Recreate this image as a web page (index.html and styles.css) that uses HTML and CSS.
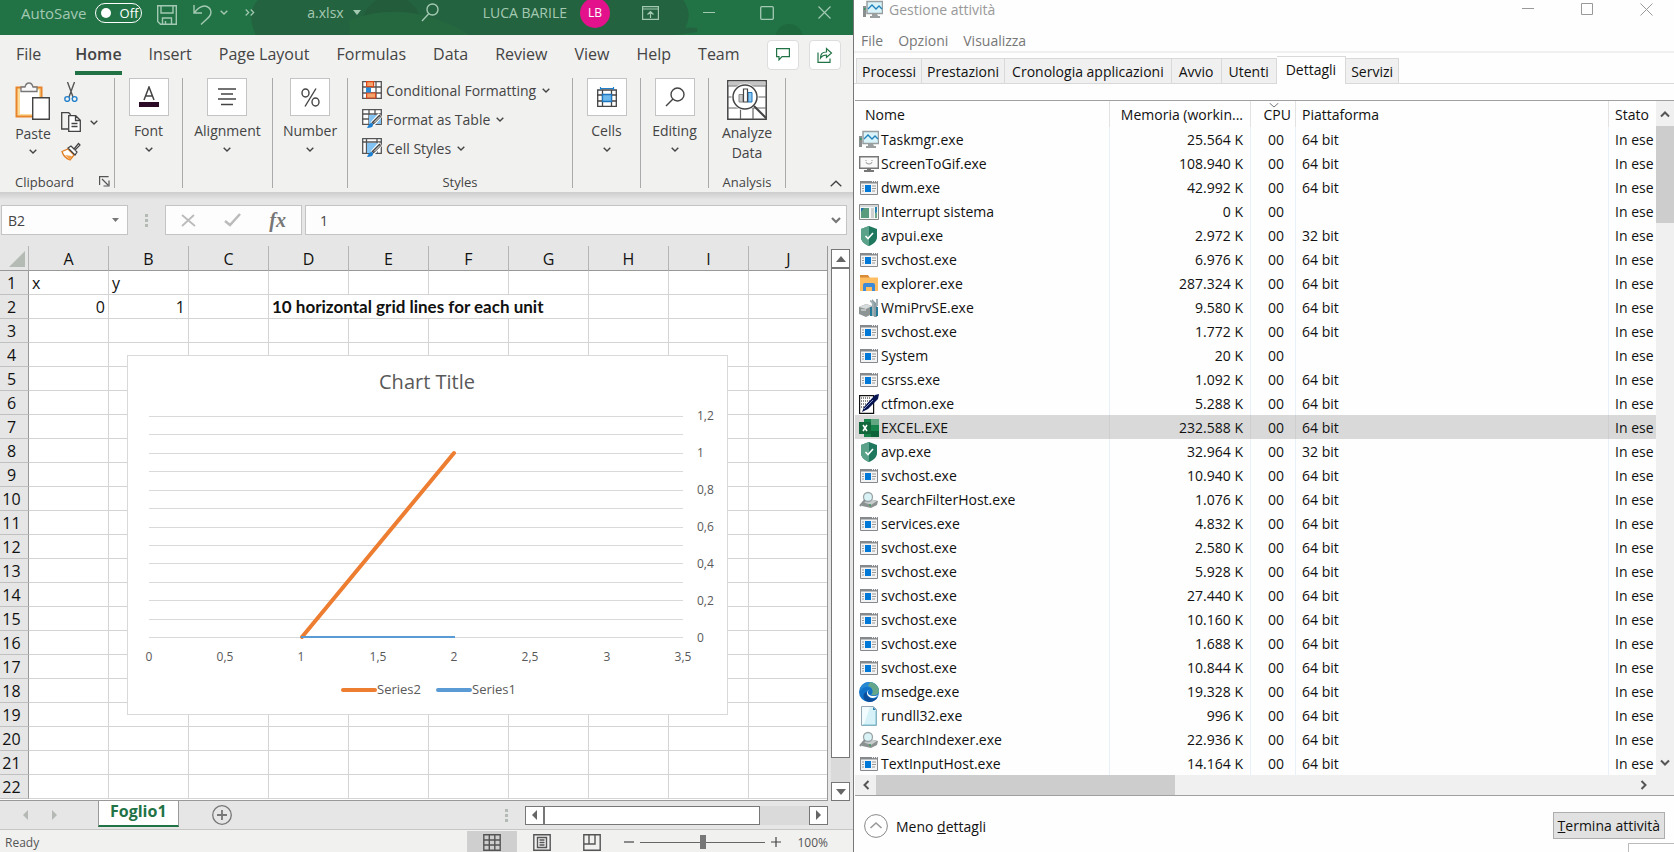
FILE: index.html
```
<!DOCTYPE html>
<html lang="en">
<head>
<meta charset="utf-8">
<title>a.xlsx - Excel</title>
<link rel="stylesheet" href="styles.css">
</head>
<body>
<svg class="sprite" aria-hidden="true">
  <symbol id="chev" viewBox="0 0 8 5"><path d="M.7.7 4 4 7.3.7" fill="none" stroke="currentColor" stroke-width="1.4"/></symbol>
  <symbol id="i-app" viewBox="0 0 20 20"><path d="M1.500 3.500h17v13h-17z" fill="#f3f3f3" stroke="#85898d"/><path d="M1 3h18v2.500H1z" fill="#85898d"/><path d="M13 3.600h1M15 3.600h1M17 3.600h1" stroke="#fff"/><path d="M6 7h6v7H6z" fill="#0078d7"/><path d="M3 8h2M3 10.500h2M3 13h2M13 8h4M13 10.500h4M13 13h3" stroke="#999"/></symbol>
  <symbol id="i-int" viewBox="0 0 20 20"><path d="M.5 2.500h19v15H.5z" fill="#f4f6f6" stroke="#888"/><path d="M1 3h18v2H1z" fill="#d5d8d8"/><path d="M2 6h8v10H2z" fill="#5a9a7d"/><path d="M2 6h3L2 10z" fill="#226fa8"/><path d="M12 7h3M12 9h3M12 11h3M12 13h3M12 15h3" stroke="#aaa"/><path d="M16 5h2v5l-2 3z" fill="#2580ae"/><path d="M16 11h2v5h-2z" fill="#6ca488"/></symbol>
  <symbol id="i-task" viewBox="0 0 20 20"><path d="M0 6h3v11H0z" fill="#8b8f8f"/><path d="M1 8h1.500v2H1z" fill="#3b9c65"/><path d="M4 1.500h15.500v12H4z" fill="#d9f3fa" stroke="#989fa1" stroke-width="1.500"/><path d="m5 9 4-4 4 4 3-3 3 3" fill="none" stroke="#2082bb" stroke-width="1.300"/><path d="M9 14h5l1 2h2v2H7v-2h2z" fill="#9b9fa0"/></symbol>
  <symbol id="i-gif" viewBox="0 0 20 20"><path d="M.7 2.700h18.600v11.600H.7z" fill="#fafafa" stroke="#777" stroke-width="1.400"/><path d="M7 6v1M13 6v1M7 8q0 2 3 2t3-2" fill="none" stroke="#999"/><path d="M8 14h4v2h3v2H5v-2h3z" fill="#777"/></symbol>
  <symbol id="i-shield" viewBox="0 0 20 20"><path d="m10 0 8 3v8c0 4-3 7-8 9-5-2-8-5-8-9V3z" fill="#1f785e"/><path d="m10 0-8 3v8c0 4 3 7 8 9z" fill="#5ba28a"/><path d="m6.500 10 2.500 2.500L14 7" fill="none" stroke="#fff" stroke-width="1.600"/></symbol>
  <symbol id="i-folder" viewBox="0 0 20 20"><path d="M1 1h8l2 3h8v13H1z" fill="#d98c38"/><path d="M1 3.500h18V17H1z" fill="#ffbe62"/><path d="M4 17v-6q0-2 2-2h8q2 0 2 2v6h-3v-4H7v4z" fill="#3d8bd8"/></symbol>
  <symbol id="i-wmi" viewBox="0 0 20 20"><path d="m0 9 7-3 6 2v8l-6 3-7-3z" fill="#8c9494"/><path d="m0 9 7-3 6 2-6 3z" fill="#d5dada"/><path d="M2 12h5" stroke="#eee"/><path d="M13 1v7l2 11h3V6z" fill="#8b9da2"/><path d="M11 3q3 0 3 5v10M18 1v7" fill="none" stroke="#9fb0b4" stroke-width="2"/><path d="M12 9v9M18 9v9" stroke="#267b9a" stroke-width="2"/></symbol>
  <symbol id="i-ctf" viewBox="0 0 20 20"><path d="M.6 1.600h14v17.800H.6z" fill="#fff" stroke="#111" stroke-width="1.200"/><path d="M2 4h10M2 7h9M2 10h7M2 13h5" stroke="#111" stroke-dasharray="1 1"/><path d="m3 18 2-5L16 1l4-1-1 5L9 15z" fill="#071452"/><path d="m5 15 9-9" stroke="#8894cc"/></symbol>
  <symbol id="i-excel" viewBox="0 0 20 20"><path d="M5 1h15v18H5z" fill="#16834a"/><path d="M12 1h8v6h-8z" fill="#62a781"/><path d="M12 13h8v6h-8z" fill="#0d633a"/><path d="M0 4h12v12H0z" fill="#12683b"/><path d="m4 7 4 6M8 7l-4 6" stroke="#fff" stroke-width="1.600"/></symbol>
  <symbol id="i-search" viewBox="0 0 20 20"><path d="m3 13 7-4 9 2-1 4-6 3-9-2z" fill="#8c9191"/><path d="m4 12 7-3 7 2-6 4z" fill="#c8cccc"/><circle cx="9" cy="7" r="4.500" fill="#d9f2f6" stroke="#9aa3a5" stroke-width="1.300"/><path d="m6 10-5 6" stroke="#8a9092" stroke-width="2"/><path d="M10 15h2" stroke="#3e9d60" stroke-width="1.500"/></symbol>
  <symbol id="i-edge" viewBox="0 0 20 20"><circle cx="10" cy="10" r="10" fill="#1272c8"/><path d="M10 0c6 0 10 4 10 9 0 4-5 6-8 4 4-4 1-8-4-8-3 0-6 2-7 4 0-5 4-9 9-9z" fill="#2687d2"/><path d="M11 0c6 1 9 5 9 9 0 4-5 5-8 4 3-2 2-8-3-9z" fill="#65a68a"/><path d="M8 10c-1 5 5 8 9 6l2-1c-3 5-8 6-12 4-3-2-4-8 1-9z" fill="#0b4d9a"/><path d="M10 8c-2 1-2 5 3 6 2 0 5 0 6-1-3 5-10 3-11-1-.5-2 1-4 2-4z" fill="#fff"/></symbol>
  <symbol id="i-doc" viewBox="0 0 20 20"><path d="M2.500.5h12l3 3v16h-15z" fill="#d6f2f8" stroke="#93a8b4"/><path d="M3 1h8L5 18H3z" fill="#f2fcfe"/><path d="m14 1 3 3h-3z" fill="#2b7fb0"/><path d="M17 5v14H4" fill="none" stroke="#7abdd0"/></symbol>
  <symbol id="s-cond" viewBox="0 0 20 18"><path d="M.7.7h18.600v16.600H.7zM6 0v18M14 0v18M0 6h20M0 12h20" fill="#fff" stroke="#555" stroke-width="1.300"/><path d="M4.600.6h7v5h-7zM4.600 12h9v5h-9z" fill="#f4a36b" stroke="#d8461b" stroke-width="1.200"/><path d="M4 6.500h5v5H4z" fill="#2b8ad5"/></symbol>
  <symbol id="s-table" viewBox="0 0 20 20"><path d="M.7.7h18.600v14.600H.7zM7 0v16M13 0v16M0 5h20M0 10h20" fill="#fff" stroke="#555" stroke-width="1.300"/><path d="M7 6h12v9H7z" fill="#83c3f3"/><path d="m18.500 6-8 9" stroke="#fff" stroke-width="5"/><path d="m18.500 6.500-8 8" stroke="#444" stroke-width="3"/><path d="m18 7.500-6 6" stroke="#fff"/><path d="M5 19q2-5 5-5 2 2 0 4-2 1-5 1z" fill="#1d7fd0"/></symbol>
  <symbol id="s-cell" viewBox="0 0 20 20"><path d="M.7.7h18.600v14.600H.7zM4.500 0v16M15 0v16M0 4h20" fill="#fff" stroke="#555" stroke-width="1.300"/><path d="M5 5h10v10H5z" fill="#83c3f3"/><path d="m18.500 6-8 9" stroke="#fff" stroke-width="5"/><path d="m18.500 6.500-8 8" stroke="#444" stroke-width="3"/><path d="m18 7.500-6 6" stroke="#fff"/><path d="M5 19q2-5 5-5 2 2 0 4-2 1-5 1z" fill="#1d7fd0"/></symbol>
</svg>

<div class="desktop">
<section class="excel" aria-label="Excel">
  <header class="titlebar">
    <svg class="title-art" viewBox="0 0 854 35" preserveAspectRatio="none" aria-hidden="true"><path d="M258 0q-12 14-2 35h420l22-3 0-4q-10-1-12 0 8-14-2-28z" fill="#24633f"/><circle cx="392" cy="26" r="30" fill="#225c3a"/><circle cx="790" cy="38" r="14" fill="#1f693f"/><path d="M350 20q60-22 120 15H350z" fill="#256840"/></svg>
    <label class="autosave" for="autosave">AutoSave</label>
    <span class="toggle"><input type="checkbox" id="autosave"><span class="knob"></span><span>Off</span></span>
    <button class="tb save" aria-label="Save"><svg width="20" height="20" viewBox="0 0 20 20"><path d="M.7.7h18.600v18.600H3.500L.7 16.500zM4 1v7h12V1M5.500 19v-6h9v6M8.500 19v-3" fill="none" stroke="currentColor" stroke-width="1.400"/></svg></button>
    <button class="tb undo" aria-label="Undo"><svg width="19" height="20" viewBox="0 0 19 20"><path d="M1 0v8h8M1.500 7.500C5 3 8 1 11.500 1 15 1 18 4 18 7c0 4-3 6-10 12.500" fill="none" stroke="currentColor" stroke-width="1.400"/></svg></button>
    <button class="tb undo-more" aria-label="Undo list"><svg width="8" height="5"><use href="#chev"/></svg></button>
    <button class="tb more" aria-label="More commands"><svg width="10" height="7" viewBox="0 0 10 7"><path d="m.7.5 3 3-3 3M5.700.5l3 3-3 3" fill="none" stroke="currentColor" stroke-width="1.200"/></svg></button>
    <button class="tb filename">a.xlsx<svg width="8" height="5" viewBox="0 0 8 5"><path d="M0 0h8L4 5z" fill="currentColor"/></svg></button>
    <button class="tb find" aria-label="Search"><svg width="18" height="19" viewBox="0 0 18 19"><path d="M7.500 11 1 18" stroke="currentColor" stroke-width="1.400"/><circle cx="11.500" cy="6.500" r="5.500" fill="none" stroke="currentColor" stroke-width="1.400"/></svg></button>
    <button class="tb user">LUCA BARILE<span class="avatar">LB</span></button>
    <span class="win-controls">
      <button class="tb" aria-label="Ribbon display options"><svg width="17" height="14" viewBox="0 0 17 14"><path d="M.6.6h15.800v12.800H.6zM1 3h15M8.500 12V6M5.500 8.500l3-3 3 3" fill="none" stroke="currentColor" stroke-width="1.200"/></svg></button>
      <button class="tb" aria-label="Minimize"><svg width="13" height="14" viewBox="0 0 13 14"><path d="M0 6.500h12" stroke="currentColor"/></svg></button>
      <button class="tb" aria-label="Maximize"><svg width="14" height="14" viewBox="0 0 14 14"><rect x=".7" y=".7" width="12.600" height="12.600" rx="1" fill="none" stroke="currentColor" stroke-width="1.300"/></svg></button>
      <button class="tb" aria-label="Close"><svg width="13" height="13" viewBox="0 0 13 13"><path d="m.5.5 12 12M12.500.5l-12 12" stroke="currentColor" stroke-width="1.200"/></svg></button>
    </span>
  </header>

  <nav class="ribbon-tabs">
    <button class="file">File</button><button class="active">Home</button><button>Insert</button><button>Page Layout</button><button>Formulas</button><button>Data</button><button>Review</button><button>View</button><button>Help</button><button>Team</button>
    <span class="tab-actions">
      <button class="boxed" aria-label="Comments"><svg width="14" height="13" viewBox="0 0 14 13"><path d="M.6.600h12.800v8H6L3 11.800V8.600H.6z" fill="none" stroke="#217346" stroke-width="1.200"/></svg></button>
      <button class="boxed" aria-label="Share"><svg width="16" height="16" viewBox="0 0 16 16"><path d="M1 5.500v9.900h12v-4M3.500 11q0-6 6-6V1.500L14.500 6l-5 4.500V8q-4 0-6 3z" fill="none" stroke="#217346" stroke-width="1.200"/></svg></button>
    </span>
  </nav>

  <div class="ribbon">
    <div class="group clipboard">
      <div class="clip-body">
        <button class="paste"><svg width="36" height="38" viewBox="0 0 36 38"><path d="M1.500 5.500h25v29h-25z" fill="#fbdc9a" stroke="#e8842a" stroke-width="2"/><path d="M5 8h19v24H5z" fill="#fff"/><path d="M6 9.500V5h4q1-4 4-4t4 4h4v4.500z" fill="#f8f8f8" stroke="#777" stroke-width="1.300"/><path d="M17.700 15.700h16.600v21.600H17.700z" fill="#fff" stroke="#444" stroke-width="1.400"/></svg><span>Paste</span><svg class="chev" width="8" height="5"><use href="#chev"/></svg></button>
        <div class="clip-tools">
          <button aria-label="Cut"><svg width="14" height="20" viewBox="0 0 14 20"><path d="m3.500 0 5.500 15M10.500 0 5 15" stroke="#555" stroke-width="1.400"/><circle cx="3.200" cy="17" r="2.400" fill="none" stroke="#2180cc" stroke-width="1.400"/><circle cx="10.600" cy="17" r="2.400" fill="none" stroke="#2180cc" stroke-width="1.400"/></svg></button>
          <button class="copy" aria-label="Copy"><svg width="20" height="20" viewBox="0 0 20 20"><path d="M7 17H.700V.7h7l2 2" fill="none" stroke="#444" stroke-width="1.300"/><path d="M7.700 3.700h7l4.600 4.600v11H7.700zM14.500 4v4.500H19M10.500 11.500h6M10.500 14.500h6" fill="#fff" stroke="#444" stroke-width="1.300"/></svg><svg class="chev" width="8" height="5"><use href="#chev"/></svg></button>
          <button aria-label="Format Painter"><svg width="20" height="19" viewBox="0 0 20 19"><path d="M1 9.500 7 7l6 6-4 5Q3 16 1 9.500z" fill="#fff" stroke="#e07b1c" stroke-width="1.300"/><path d="m4 13 7 1-2 4z" fill="#f2a04a"/><path d="m7 6 3-2 3 3 4.500-5.500 1.500 1.500-5 5 2 2-2 3z" fill="#fff" stroke="#444" stroke-width="1.200"/></svg></button>
        </div>
      </div>
      <div class="group-name spread">Clipboard<svg width="11" height="11" viewBox="0 0 11 11"><path d="M.6 9V.6h9M3 3l6 6M10 4.500V10H4.500" fill="none" stroke="#555" stroke-width="1.200"/></svg></div>
    </div>
    <div class="group narrow"><button class="tile-btn"><span class="tile"><svg width="20" height="22" viewBox="0 0 20 22"><path d="m5 14 5-13 5 13M6.700 10h6.600" fill="none" stroke="#444" stroke-width="1.500"/><path d="M0 16h20v5H0z" fill="#2b0a25"/></svg></span>Font<svg class="chev" width="8" height="5"><use href="#chev"/></svg></button></div>
    <div class="group align"><button class="tile-btn"><span class="tile"><svg width="18" height="18" viewBox="0 0 18 18"><path d="M0 1h18M3 6h12M0 11h18M3 16.500h12" stroke="#444" stroke-width="1.300"/></svg></span>Alignment<svg class="chev" width="8" height="5"><use href="#chev"/></svg></button></div>
    <div class="group number"><button class="tile-btn"><span class="tile"><svg width="19" height="19" viewBox="0 0 19 19"><ellipse cx="4.500" cy="5" rx="3.500" ry="4" fill="none" stroke="#444" stroke-width="1.400"/><ellipse cx="14.500" cy="14" rx="3.500" ry="4" fill="none" stroke="#444" stroke-width="1.400"/><path d="M15 .5 4 18.500" stroke="#444" stroke-width="1.400"/></svg></span>Number<svg class="chev" width="8" height="5"><use href="#chev"/></svg></button></div>
    <div class="group styles">
      <div class="style-list">
        <button><svg width="20" height="18"><use href="#s-cond"/></svg>Conditional Formatting<svg class="chev" width="8" height="5"><use href="#chev"/></svg></button>
        <button><svg width="20" height="20"><use href="#s-table"/></svg>Format as Table<svg class="chev" width="8" height="5"><use href="#chev"/></svg></button>
        <button><svg width="20" height="20"><use href="#s-cell"/></svg>Cell Styles<svg class="chev" width="8" height="5"><use href="#chev"/></svg></button>
      </div>
      <div class="group-name">Styles</div>
    </div>
    <div class="group narrow"><button class="tile-btn"><span class="tile"><svg width="20" height="20" viewBox="0 0 20 20"><path d="M.7 3h18.600v16.300H.7zM5.500 3v16M14.500 3v16M0 8h20M0 14h20" fill="none" stroke="#444" stroke-width="1.300"/><path d="M5.500 7.500h9v7h-9z" fill="#6db9ee" stroke="#1d75bd" stroke-width="1.300"/><path d="M3 1.500h14M3.500 0v3M16.500 0v3" stroke="#2180cc" stroke-width="1.200"/></svg></span>Cells<svg class="chev" width="8" height="5"><use href="#chev"/></svg></button></div>
    <div class="group narrow"><button class="tile-btn"><span class="tile"><svg width="20" height="20" viewBox="0 0 20 20"><path d="m8 12-7 7" stroke="#444" stroke-width="1.400"/><circle cx="12.500" cy="7.500" r="6.500" fill="none" stroke="#444" stroke-width="1.400"/></svg></span>Editing<svg class="chev" width="8" height="5"><use href="#chev"/></svg></button></div>
    <div class="group analysis">
      <button class="analyze"><svg width="40" height="40" viewBox="0 0 40 40"><path d="M.8.800h38.400v38.400H.8z" fill="#fff" stroke="#444" stroke-width="1.500"/><path d="M1.500 1.500h37v4h-37z" fill="#c5c5c5"/><path d="M1 6h38M1 17h38M1 28h38M13.500 28v11M26 28v11" stroke="#666" stroke-width="1.200"/><circle cx="18" cy="17" r="13.500" fill="#fff"/><circle cx="18" cy="17" r="12" fill="#fff" stroke="#444" stroke-width="1.500"/><path d="m27 26 12 12" stroke="#444" stroke-width="2"/><path d="M12 14.500h4V22h-4z" fill="#c9c9c9" stroke="#888"/><path d="M21 12.500h4V22h-4z" fill="#8ac8f2" stroke="#1d75bd"/><path d="M16.500 9h4v13h-4z" fill="#fff" stroke="#444" stroke-width="1.200"/></svg><span>Analyze<br>Data</span></button>
      <div class="group-name">Analysis</div>
    </div>
    <button class="collapse" aria-label="Collapse the ribbon"><svg width="12" height="7" viewBox="0 0 12 7"><path d="m.7 6.300 5.300-5 5.300 5" fill="none" stroke="#444" stroke-width="1.400"/></svg></button>
  </div>

  <div class="formula-bar">
    <div class="name-box"><input aria-label="Name box" value="B2"><button aria-label="Names"><svg width="7" height="4" viewBox="0 0 7 4"><path d="M0 0h7L3.500 4z" fill="#777"/></svg></button></div>
    <span class="grip"></span>
    <div class="fx-buttons">
      <button aria-label="Cancel"><svg width="15" height="13" viewBox="0 0 15 13"><path d="m1 1 13 11M13 1 1 12" stroke="#bbb" stroke-width="1.800"/></svg></button>
      <button aria-label="Enter"><svg width="17" height="14" viewBox="0 0 17 14"><path d="m1 8 5 4L16 1" fill="none" stroke="#bbb" stroke-width="2.500"/></svg></button>
      <button class="fx" aria-label="Insert function">fx</button>
    </div>
    <div class="formula"><input aria-label="Formula" value="1"><button aria-label="Expand formula bar"><svg width="10" height="7" viewBox="0 0 10 7"><path d="m1 1 4 4 4-4" fill="none" stroke="#777" stroke-width="2.200"/></svg></button></div>
  </div>

  <div class="sheet-area">
    <div class="sheet">
      <table class="cells" id="cells"></table>
      <svg class="chart" width="601" height="360" viewBox="0 0 601 360" role="img" aria-label="Chart Title">
        <rect x=".5" y=".5" width="600" height="359" fill="#fff" stroke="#d9d9d9"/>
        <text class="chart-title" x="300" y="34" text-anchor="middle">Chart Title</text>
        <path class="rules" d="M22 61.500h534M22 79.500h534M22 98.500h534M22 116.500h534M22 135.500h534M22 153.500h534M22 172.500h534M22 190.500h534M22 208.500h534M22 227.500h534M22 245.500h534M22 264.500h534M22 282.500h534"/>
        <path d="M175 282 327 98" stroke="#ed7d31" stroke-width="4" stroke-linecap="round"/>
        <path d="M174 282h154" stroke="#5b9bd5" stroke-width="2"/>
        <g class="axis">
          <text x="570" y="65">1,2</text><text x="570" y="102">1</text><text x="570" y="139">0,8</text><text x="570" y="176">0,6</text><text x="570" y="213">0,4</text><text x="570" y="250">0,2</text><text x="570" y="287">0</text>
        </g>
        <g class="axis" text-anchor="middle">
          <text x="22" y="306">0</text><text x="98" y="306">0,5</text><text x="174" y="306">1</text><text x="251" y="306">1,5</text><text x="327" y="306">2</text><text x="403" y="306">2,5</text><text x="480" y="306">3</text><text x="556" y="306">3,5</text>
        </g>
        <path d="M216 335h32" stroke="#ed7d31" stroke-width="4" stroke-linecap="round"/><path d="M311 335h32" stroke="#5b9bd5" stroke-width="4" stroke-linecap="round"/>
        <g class="legend"><text x="250" y="339">Series2</text><text x="345" y="339">Series1</text></g>
      </svg>
    </div>
    <div class="vscroll">
      <button aria-label="Scroll up"><svg width="10" height="6" viewBox="0 0 10 6"><path d="m0 6 5-6 5 6z" fill="#666"/></svg></button>
      <div class="thumb"></div><div class="track"></div>
      <button aria-label="Scroll down"><svg width="10" height="6" viewBox="0 0 10 6"><path d="m0 0 5 6 5-6z" fill="#666"/></svg></button>
    </div>
  </div>

  <div class="sheet-tabs">
    <button class="nav-arrow" aria-label="Previous sheet"><svg width="5" height="10" viewBox="0 0 5 10"><path d="M5 0v10L0 5z" fill="#b5b9b5"/></svg></button>
    <button class="nav-arrow" aria-label="Next sheet"><svg width="5" height="10" viewBox="0 0 5 10"><path d="M0 0v10l5-5z" fill="#b5b9b5"/></svg></button>
    <button class="sheet-tab">Foglio1</button>
    <button class="add-sheet" aria-label="New sheet"><svg width="20" height="20" viewBox="0 0 20 20"><circle cx="10" cy="10" r="9.300" fill="none" stroke="#777" stroke-width="1.300"/><path d="M5 10h10M10 5v10" stroke="#777" stroke-width="1.800"/></svg></button>
    <span class="grip"></span>
    <div class="hscroll">
      <button aria-label="Scroll left"><svg width="5" height="10" viewBox="0 0 5 10"><path d="M5 0v10L0 5z" fill="#666"/></svg></button>
      <div class="thumb"></div><div class="track"></div>
      <button aria-label="Scroll right"><svg width="5" height="10" viewBox="0 0 5 10"><path d="M0 0v10l5-5z" fill="#666"/></svg></button>
    </div>
  </div>

  <footer class="status">
    <span class="ready">Ready</span>
    <button class="view on" aria-label="Normal view"><svg width="18" height="17" viewBox="0 0 18 17"><path d="M.8.800h16.400v15.400H.8zM6.300 1v15M11.800 1v15M1 6h16M1 11h16" fill="none" stroke="#555" stroke-width="1.400"/></svg></button>
    <button class="view" aria-label="Page layout view"><svg width="18" height="17" viewBox="0 0 18 17"><path d="M.8.800h16.400v15.400H.8zM4.500 3.500h9v10h-9zM6.500 6h5M6.500 8.500h5M6.500 11h5" fill="none" stroke="#555" stroke-width="1.400"/></svg></button>
    <button class="view" aria-label="Page break view"><svg width="18" height="17" viewBox="0 0 18 17"><path d="M.8.800h16.400v15.400H.8zM6 1v9M1 10h11V1" fill="none" stroke="#555" stroke-width="1.400"/></svg></button>
    <button class="zoom-step" aria-label="Zoom out"><svg width="10" height="10" viewBox="0 0 10 10"><path d="M0 5h10" stroke="#444" stroke-width="1.200"/></svg></button>
    <input class="zoom" type="range" min="0" max="100" value="50" aria-label="Zoom">
    <button class="zoom-step" aria-label="Zoom in"><svg width="10" height="10" viewBox="0 0 10 10"><path d="M0 5h10M5 0v10" stroke="#444" stroke-width="1.200"/></svg></button>
    <button class="percent">100%</button>
  </footer>
</section>

<section class="taskmgr" lang="it" aria-label="Gestione attività">
  <header class="tm-title">
    <svg width="20" height="20"><use href="#i-task"/></svg><span>Gestione attività</span>
    <span class="tm-controls">
      <button aria-label="Riduci"><svg width="13" height="13" viewBox="0 0 13 13"><path d="M0 5.500h12" stroke="#999"/></svg></button>
      <button aria-label="Ingrandisci"><svg width="13" height="13" viewBox="0 0 13 13"><path d="M.500.500h11v11H.5z" fill="none" stroke="#999"/></svg></button>
      <button aria-label="Chiudi"><svg width="13" height="13" viewBox="0 0 13 13"><path d="m.5.500 12 12m0-12-12 12" stroke="#999"/></svg></button>
    </span>
  </header>
  <nav class="tm-menu"><button>File</button><button>Opzioni</button><button>Visualizza</button></nav>
  <div class="tm-tabs"><button>Processi</button><button>Prestazioni</button><button class="wide">Cronologia applicazioni</button><button class="wide">Avvio</button><button class="wide">Utenti</button><button class="active">Dettagli</button><button>Servizi</button></div>
  <div class="tm-body">
    <div class="list">
      <table class="procs">
        <colgroup><col class="c-name"><col class="c-mem"><col class="c-cpu"><col class="c-plat"><col class="c-state"></colgroup>
        <thead><tr><th>Nome</th><th class="num">Memoria (workin...</th><th class="num cpu-head">CPU<svg class="sort" width="10" height="5" viewBox="0 0 10 5"><path d="m.5 0 4.500 4L9.500 0" fill="none" stroke="#777"/></svg></th><th>Piattaforma</th><th>Stato</th></tr></thead>
        <tbody id="procs"></tbody>
      </table>
    </div>
    <div class="tm-vscroll">
      <button aria-label="Scorri su"><svg width="10" height="8" viewBox="0 0 10 8"><path d="m1 6.500 4-4 4 4" fill="none" stroke="#555" stroke-width="2"/></svg></button>
      <div class="thumb"></div>
      <button aria-label="Scorri giù"><svg width="10" height="8" viewBox="0 0 10 8"><path d="m1 1.500 4 4 4-4" fill="none" stroke="#555" stroke-width="2"/></svg></button>
    </div>
  </div>
  <div class="tm-hscroll">
    <button aria-label="Scorri a sinistra"><svg width="8" height="10" viewBox="0 0 8 10"><path d="m6.500 1-4 4 4 4" fill="none" stroke="#555" stroke-width="2"/></svg></button>
    <div class="thumb"></div>
    <button class="right" aria-label="Scorri a destra"><svg width="8" height="10" viewBox="0 0 8 10"><path d="m1.500 1 4 4-4 4" fill="none" stroke="#555" stroke-width="2"/></svg></button>
  </div>
  <footer class="tm-foot">
    <button class="less"><svg width="24" height="24" viewBox="0 0 24 24"><circle cx="12" cy="12" r="11.400" fill="none" stroke="#888"/><path d="m6.500 14 5.500-5 5.500 5" fill="none" stroke="#999" stroke-width="1.600"/></svg><span>Meno <u>d</u>ettagli</span></button>
    <button class="end"><span><u>T</u>ermina attività</span></button>
    <span class="peek"></span>
  </footer>
</section>
</div>
<script src="script.js"></script>
</body>
</html>
```

FILE: styles.css
```
* { box-sizing: border-box; }
body { margin: 0; font-family: "Open Sans", "Noto Sans", sans-serif; font-size: 14px; color: #444; }
button, input { font: inherit; color: inherit; border: 0; padding: 0; margin: 0; background: none; }
button { white-space: nowrap; }
svg { display: block; flex: none; }
.sprite { position: absolute; width: 0; height: 0; }
.desktop { display: grid; grid-template-columns: 854fr 820fr; height: 100vh; min-height: 600px; overflow: hidden; }

/* Spreadsheet window */
.excel { display: flex; flex-direction: column; min-width: 0; overflow: hidden; background: #e6e6e6; border-right: 1px solid #777; }
.titlebar { position: relative; display: flex; align-items: center; height: 35px; padding: 0 22px 10px 21px; background: #217346; color: #a4c9b3; flex: none; }
.titlebar > * { position: relative; }
.titlebar .title-art { position: absolute; inset: 0; width: 100%; height: 100%; }
.autosave { font-size: 15px; }
.toggle { display: flex; align-items: center; gap: 9px; width: 47px; height: 20px; margin-left: 8px; padding-left: 5px; border: 1px solid #fff; border-radius: 10px; color: #fff; font-size: 13px; }
.toggle input { position: absolute; inset: 0; opacity: 0; }
.knob { width: 10px; height: 10px; border-radius: 50%; background: #fff; }
.tb { display: flex; align-items: center; }
.save { margin-left: 15px; margin-top: 4px; }
.undo { margin-left: 16px; margin-top: 4px; }
.undo-more { margin-left: 8px; }
.more { margin-left: 17px; }
.filename { margin-left: auto; gap: 9px; }
.find { margin-left: 60px; }
.user { margin-left: 44px; gap: 13px; }
.avatar { display: grid; place-items: center; width: 30px; height: 30px; border-radius: 50%; background: #e3128c; color: #fff; font-size: 12px; }
.win-controls { display: flex; align-items: center; gap: 44px; margin-left: 32px; }

.ribbon-tabs { display: flex; align-items: center; height: 43px; padding: 0 16px 4px; background: #f1f1f0; font-size: 16px; flex: none; gap: 27px; }
.ribbon-tabs button { height: 38px; padding-top: 1px; border-bottom: 4px solid transparent; margin-top: 2px; line-height: 30px; }
.ribbon-tabs .active { border-color: #217346; font-weight: 600; }
.ribbon-tabs .file { margin-right: 7px; }
.tab-actions { display: flex; gap: 10px; margin-left: auto; }
.ribbon-tabs .boxed { display: grid; place-items: center; width: 32px; height: 30px; margin: 0; padding: 0; border: 1px solid #ddd; border-radius: 4px; background: #fff; }

.ribbon { display: flex; height: 114px; background: #f1f1f0; flex: none; }
.group { display: flex; flex-direction: column; align-items: center; height: 110px; border-right: 1px solid #aaa; flex: none; }
.clipboard { width: 115px; align-items: stretch; }
.narrow { width: 68px; }
.align { width: 90px; }
.number { width: 75px; }
.styles { width: 225px; align-items: stretch; }
.analysis { width: 77px; }
.group-name { margin-top: auto; font-size: 13px; line-height: 12px; text-align: center; }
.spread { display: flex; justify-content: space-between; padding: 0 4px 0 15px; }
.clip-body { display: flex; gap: 10px; padding: 4px 0 0 15px; }
.paste { display: flex; flex-direction: column; align-items: center; width: 36px; }
.paste span { line-height: 28px; }
.paste .chev { margin-top: 1px; }
.clip-tools { display: flex; flex-direction: column; align-items: flex-start; gap: 10px; }
.copy { display: flex; align-items: center; gap: 9px; }
.clip-tools button:first-child { padding-left: 3px; }
.tile-btn { display: flex; flex-direction: column; align-items: center; line-height: 28px; }
.tile-btn .chev { margin-top: 2px; }
.tile { display: grid; place-items: center; width: 40px; height: 38px; margin-bottom: 1px; border: 1px solid #c4c4c4; background: #fff; }
.style-list { display: flex; flex-direction: column; gap: 5px; padding-left: 14px; }
.style-list button { display: flex; align-items: center; height: 24px; }
.style-list button svg:first-child { margin-right: 4px; }
.style-list .chev { margin-left: 6px; }
.analyze { display: flex; flex-direction: column; align-items: center; gap: 3px; padding-top: 2px; line-height: 20px; }
.collapse { align-self: flex-end; margin: 0 11px 5px auto; }

.formula-bar { display: flex; align-items: center; height: 54px; padding: 2px 6px 0 1px; background: linear-gradient(#cdcdcd, #e6e6e6 8px); flex: none; }
.name-box, .fx-buttons, .formula { display: flex; align-items: center; height: 30px; border: 1px solid #c4c4c4; background: #fdfdfd; }
.name-box { width: 127px; padding: 0 8px 0 6px; }
.name-box input, .formula input { flex: 1; min-width: 0; outline: 0; }
.grip { width: 3px; height: 13px; margin: 0 17px; background: repeating-linear-gradient(#b4bab4 0 3px, transparent 3px 5px); }
.fx-buttons { width: 137px; justify-content: space-between; padding: 0 15px; }
.fx { font: italic bold 20px/20px "Liberation Serif", serif; color: #777; }
.formula { flex: 1; margin-left: 3px; padding: 0 5px 0 14px; }

.sheet-area { display: flex; flex: 1; min-height: 0; }
.sheet { position: relative; flex: 1; min-width: 0; overflow: hidden; border-right: 1px solid #999; border-bottom: 1px solid #999; background: #fff; }
.cells { width: 829px; table-layout: fixed; border-collapse: separate; border-spacing: 0; color: #111; }
.cells th { font-weight: 400; font-size: 16px; background: #e6e6e6; padding: 0; line-height: 20px; }
.cells .corner-col { width: 29px; }
.cells thead th { height: 25px; padding-top: 2px; border-bottom: 1px solid #999; border-right: 1px solid #b5b5b5; }
.cells tbody th { height: 24px; border-right: 1px solid #999; border-bottom: 1px solid #c0c0c0; padding-right: 5px; }
.cells td { height: 24px; padding: 0 3px; border-right: 1px solid #d4d4d4; border-bottom: 1px solid #d4d4d4; line-height: 20px; white-space: nowrap; font-size: 16px; }
.cells .n { text-align: right; }
.cells .b { font-family: Lato, "Open Sans", sans-serif; font-weight: 700; font-size: 17px; }
.corner svg { margin: 0 3px 0 auto; }
.chart { position: absolute; left: 127px; top: 109px; }
.chart text { font-family: "Open Sans", sans-serif; fill: #595959; }
.chart .chart-title { font-size: 20px; }
.chart .axis text { font-size: 12px; }
.chart .legend text { font-size: 13px; }
.rules { fill: none; stroke: #d9d9d9; }
.vscroll { display: flex; flex-direction: column; width: 19px; margin: 3px 3px 0; flex: none; }
.vscroll button, .hscroll button { display: grid; place-items: center; width: 19px; height: 19px; border: 1px solid #777; background: #fff; flex: none; }
.vscroll .thumb { flex: 490; border: 1px solid #777; background: #fff; }
.vscroll .track { flex: 24; background: #dadada; }

.sheet-tabs { display: flex; align-items: center; height: 28px; padding-right: 25px; flex: none; }
.nav-arrow { margin-left: 23px; }
.nav-arrow + .nav-arrow { margin-left: 24px; }
.sheet-tab { align-self: flex-start; height: 26px; margin-left: 41px; padding: 0 11px 4px; border: 1px solid #999; border-top: 0; border-bottom: 2px solid #217346; background: #fff; color: #217346; font-weight: 700; font-size: 16px; line-height: 20px; }
.add-sheet { margin-left: 33px; }
.sheet-tabs .grip { margin-left: auto; }
.hscroll { display: flex; width: 303px; }
.hscroll .thumb { flex: 216; border: 1px solid #777; background: #fff; }
.hscroll .track { flex: 49; background: #dadada; }
.status { display: flex; align-items: center; height: 23px; padding: 2px 25px 0 5px; border-top: 1px solid #c6c6c6; background: #f1f1f0; font-size: 12px; flex: none; color: #555; }
.ready { margin-right: auto; }
.view { display: grid; place-items: center; width: 50px; height: 22px; }
.view.on { background: #cfcfcf; }
.zoom-step { padding: 0 6px; }
.view + .zoom-step { margin-left: 1px; }
.zoom { appearance: none; width: 125px; height: 14px; background: linear-gradient(#666, #666) center / 100% 1px no-repeat; }
.zoom::-webkit-slider-thumb { appearance: none; width: 6px; height: 14px; background: #777; }
.percent { margin-left: 10px; }

/* Task manager window */
.taskmgr { display: flex; flex-direction: column; min-width: 0; background: #fefefe; color: #111; overflow: hidden; }
.tm-title { display: flex; align-items: flex-start; gap: 6px; height: 29px; padding: 0 21px 0 9px; color: #999; line-height: 19px; flex: none; }
.tm-controls { display: flex; gap: 46px; margin-left: auto; padding-top: 3px; }
.tm-menu { display: flex; gap: 15px; height: 24px; padding: 0 7px; border-bottom: 2px solid #f0f0f0; color: #777; flex: none; }
.tm-tabs { display: flex; align-items: flex-end; height: 31px; padding-left: 2px; box-shadow: inset 0 -1px #d9d9d9; flex: none; }
.tm-tabs button { height: 26px; padding: 1px 5px 0; border: 1px solid #d9d9d9; border-left-width: 0; background: #f0f0f0; line-height: 24px; }
.tm-tabs button:first-child { border-left-width: 1px; }
.tm-tabs .wide { padding: 1px 7px 0; }
.tm-tabs .active { height: 28px; padding: 0 9px 2px; background: #fefefe; border-bottom: 0; }
.tm-body { display: flex; flex: 1; min-height: 0; margin: 16px 0 0 1px; border-top: 1px solid #a0a0a0; }
.list { flex: 1; min-width: 0; overflow: hidden; }
.procs { width: 100%; table-layout: fixed; border-collapse: separate; border-spacing: 0; }
.c-name { width: 255px; } .c-mem { width: 141px; } .c-cpu { width: 45px; } .c-state { width: 47px; }
.procs th { height: 26px; padding: 2px 6px 0; border-right: 1px solid #e2e2e2; font-weight: 400; text-align: left; line-height: 20px; white-space: nowrap; }
.procs th:first-child { padding-left: 10px; }
.procs td { height: 24px; padding: 2px 6px 0; border-right: 1px solid #e8f1fa; line-height: 20px; white-space: nowrap; }
.procs th:last-child, .procs td:last-child { border-right: 0; padding-right: 0; }
.procs .num { text-align: right; padding-right: 7px; }
.procs td.cpu { padding-right: 11px; }
.procs td:first-child { padding-left: 4px; }
.proc { display: flex; align-items: center; gap: 2px; }
.procs .cpu-head { position: relative; padding-left: 0; padding-right: 4px; }
.sort { position: absolute; left: 18px; top: 2px; }
.selected td { background: #d9d9d9; border-right-color: #cecece; }
.tm-vscroll { display: flex; flex-direction: column; width: 18px; background: #f0f0f0; flex: none; }
.tm-vscroll button { display: grid; place-items: center; height: 25px; flex: none; }
.tm-vscroll .thumb { height: 97px; background: #cdcdcd; }
.tm-vscroll button:last-child { margin-top: auto; }
.tm-hscroll { display: flex; height: 21px; margin-left: 1px; padding-right: 18px; background: #f0f0f0; border-bottom: 1px solid #a0a0a0; flex: none; }
.tm-hscroll button { display: grid; place-items: center; width: 21px; }
.tm-hscroll .right { width: 24px; margin-left: auto; }
.tm-hscroll .thumb { width: 299px; background: #cdcdcd; }
.tm-foot { position: relative; display: flex; justify-content: space-between; align-items: flex-start; height: 56px; padding: 16px 9px 0 10px; flex: none; }
.less { display: flex; align-items: center; gap: 8px; height: 28px; }
.end { height: 27px; padding: 0 4px; border: 1px solid #adadad; background: #e1e1e1; }
.peek { position: absolute; right: 0; bottom: 0; width: 46px; height: 9px; border: 1px solid #bbb; border-width: 1px 0 0 1px; background: #fff; }
```

FILE: script.js
```
const columns = "ABCDEFGHIJ".split("");
const values = {
  A1: { text: "x" }, B1: { text: "y" },
  A2: { text: "0", cls: "n" }, B2: { text: "1", cls: "n" },
  D2: { text: "10 horizontal grid lines for each unit", cls: "b", span: 4 }
};

let html = '<colgroup><col class="corner-col">' + "<col>".repeat(columns.length) + "</colgroup>";
html += '<thead><tr><th class="corner"><svg width="16" height="16" viewBox="0 0 16 16"><path d="M16 0v16H0z" fill="#b4bab4"/></svg></th>';
html += columns.map(c => `<th scope="col">${c}</th>`).join("") + "</tr></thead><tbody>";
for (let row = 1; row <= 22; row++) {
  html += `<tr><th scope="row">${row}</th>`;
  for (let i = 0; i < columns.length; i++) {
    const cell = values[columns[i] + row] || { text: "" };
    const span = cell.span || 1;
    html += `<td class="${cell.cls || ""}" colspan="${span}">${cell.text}</td>`;
    i += span - 1;
  }
  html += "</tr>";
}
document.getElementById("cells").innerHTML = html + "</tbody>";

const processes = [
  ["task", "Taskmgr.exe", "25.564", "64 bit"],
  ["gif", "ScreenToGif.exe", "108.940", "64 bit"],
  ["app", "dwm.exe", "42.992", "64 bit"],
  ["int", "Interrupt sistema", "0", ""],
  ["shield", "avpui.exe", "2.972", "32 bit"],
  ["app", "svchost.exe", "6.976", "64 bit"],
  ["folder", "explorer.exe", "287.324", "64 bit"],
  ["wmi", "WmiPrvSE.exe", "9.580", "64 bit"],
  ["app", "svchost.exe", "1.772", "64 bit"],
  ["app", "System", "20", ""],
  ["app", "csrss.exe", "1.092", "64 bit"],
  ["ctf", "ctfmon.exe", "5.288", "64 bit"],
  ["excel", "EXCEL.EXE", "232.588", "64 bit"],
  ["shield", "avp.exe", "32.964", "32 bit"],
  ["app", "svchost.exe", "10.940", "64 bit"],
  ["search", "SearchFilterHost.exe", "1.076", "64 bit"],
  ["app", "services.exe", "4.832", "64 bit"],
  ["app", "svchost.exe", "2.580", "64 bit"],
  ["app", "svchost.exe", "5.928", "64 bit"],
  ["app", "svchost.exe", "27.440", "64 bit"],
  ["app", "svchost.exe", "10.160", "64 bit"],
  ["app", "svchost.exe", "1.688", "64 bit"],
  ["app", "svchost.exe", "10.844", "64 bit"],
  ["edge", "msedge.exe", "19.328", "64 bit"],
  ["doc", "rundll32.exe", "996", "64 bit"],
  ["search", "SearchIndexer.exe", "22.936", "64 bit"],
  ["app", "TextInputHost.exe", "14.164", "64 bit"]
];
document.getElementById("procs").innerHTML = processes.map(([icon, name, memory, platform]) =>
  `<tr class="${name === "EXCEL.EXE" ? "selected" : ""}"><td><span class="proc"><svg width="20" height="20"><use href="#i-${icon}"/></svg>${name}</span></td>` +
  `<td class="num">${memory} K</td><td class="num cpu">00</td><td>${platform}</td><td>In ese</td></tr>`).join("");
```
